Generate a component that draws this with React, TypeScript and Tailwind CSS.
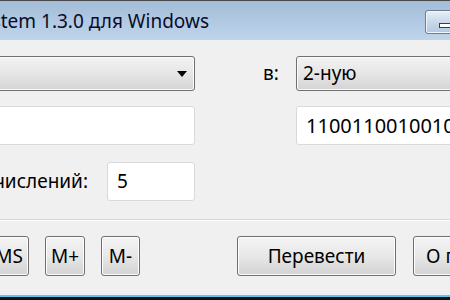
import React from 'react';

const font = { fontFamily: '"Noto Sans", "Open Sans", sans-serif' };

function WinButton({ label, className }: { label: string; className?: string }) {
  return (
    <div
      className={
        'flex h-[40px] shrink-0 items-center justify-center whitespace-nowrap rounded-[3px] border border-[#707070] bg-gradient-to-b from-[#f4f4f4] via-[#e8e8e8] to-[#d2d2d2] text-[19px] text-black shadow-[inset_0_0_0_1px_#fcfcfc] ' +
        (className ?? '')
      }
    >
      {label}
    </div>
  );
}

function Combo({ value, className }: { value?: string; className?: string }) {
  return (
    <div
      className={
        'flex h-[35px] shrink-0 items-center rounded-[3px] border border-[#707070] bg-gradient-to-b from-[#f3f3f3] via-[#e6e6e6] to-[#d4d4d4] px-[6px] text-[19px] text-black shadow-[inset_0_0_0_1px_#fbfbfb] ' +
        (className ?? '')
      }
    >
      <span className="flex-1 leading-none">{value}</span>
      {!value && (
        <svg width="10" height="6" viewBox="0 0 10 6" className="mr-[1px]">
          <path d="M0 0 H10 L5 6 Z" fill="#000" />
        </svg>
      )}
    </div>
  );
}

function TextBox({ value, className }: { value?: string; className?: string }) {
  return (
    <div
      className={
        'flex h-[39px] shrink-0 items-center overflow-hidden whitespace-nowrap rounded-[3px] border border-[#d6dadf] bg-white text-[19px] text-black ' +
        (className ?? '')
      }
    >
      {value}
    </div>
  );
}

export default function App() {
  return (
    <div className="relative flex h-[300px] w-[450px] flex-col overflow-hidden bg-[#f0f0f0]" style={font}>
      {/* Title bar */}
      <div className="flex h-[40px] shrink-0 border-t border-[#4a4a4a] bg-gradient-to-b from-[#a3bcd8] to-[#bed5eb]">
        <div className="flex w-[209px] shrink-0 justify-end overflow-hidden whitespace-nowrap pt-[6px] text-[19px] text-[#0b0b2a]">
          Number System 1.3.0 для Windows
        </div>
        <div className="flex-1" />
        <div className="-mr-[10px] mt-[9px] flex h-[24px] w-[35px] shrink-0 items-center justify-end rounded-[3px] border border-[#6c7d96] bg-gradient-to-b from-[#e9f0f8] via-[#c9d8ea] to-[#b3c8e0] pr-[8px] pt-[6px] shadow-[inset_0_0_0_1px_#f2f6fb]">
          <div className="h-[5px] w-[12px] border border-[#3d3d3d] bg-white" />
        </div>
      </div>

      {/* Body */}
      <div className="flex flex-1 flex-col">
        <div className="mt-[16px] flex h-[35px] items-center">
          <Combo className="-ml-[10px] w-[205px]" />
          <div className="ml-[68px] w-[33px] shrink-0 text-[19px] text-black">в:</div>
          <Combo value="2-ную" className="w-[180px]" />
        </div>

        <div className="mt-[15px] flex items-center">
          <TextBox className="-ml-[10px] w-[205px]" />
          <TextBox value="1100110010010011" className="ml-[101px] w-[180px] pl-[9px] text-[20px]" />
        </div>

        <div className="mt-[17px] flex items-center">
          <div className="flex w-[88px] shrink-0 justify-end overflow-hidden whitespace-nowrap text-[19px] text-black">
            Точность вычислений:
          </div>
          <TextBox value="5" className="ml-[19px] w-[88px] pl-[9px]" />
        </div>

        <div className="mt-[18px] h-[2px] shrink-0 border-t border-[#d5d5d5] bg-white" />

        <div className="mt-[15px] flex items-center">
          <div className="flex w-[140px] shrink-0 justify-end gap-[16px] overflow-hidden">
            <WinButton label="MS" className="w-[40px]" />
            <WinButton label="M+" className="w-[40px]" />
            <WinButton label="M-" className="w-[39px]" />
          </div>
          <WinButton label="Перевести" className="ml-[97px] w-[159px]" />
          <WinButton label="О программе" className="ml-[17px] w-[120px] justify-start pl-[12px]" />
        </div>

        <div className="flex-1" />
        <div className="h-[2px] shrink-0 bg-[#5cc8ef]" />
        <div className="h-[3px] shrink-0 bg-[#111]" />
      </div>
    </div>
  );
}
